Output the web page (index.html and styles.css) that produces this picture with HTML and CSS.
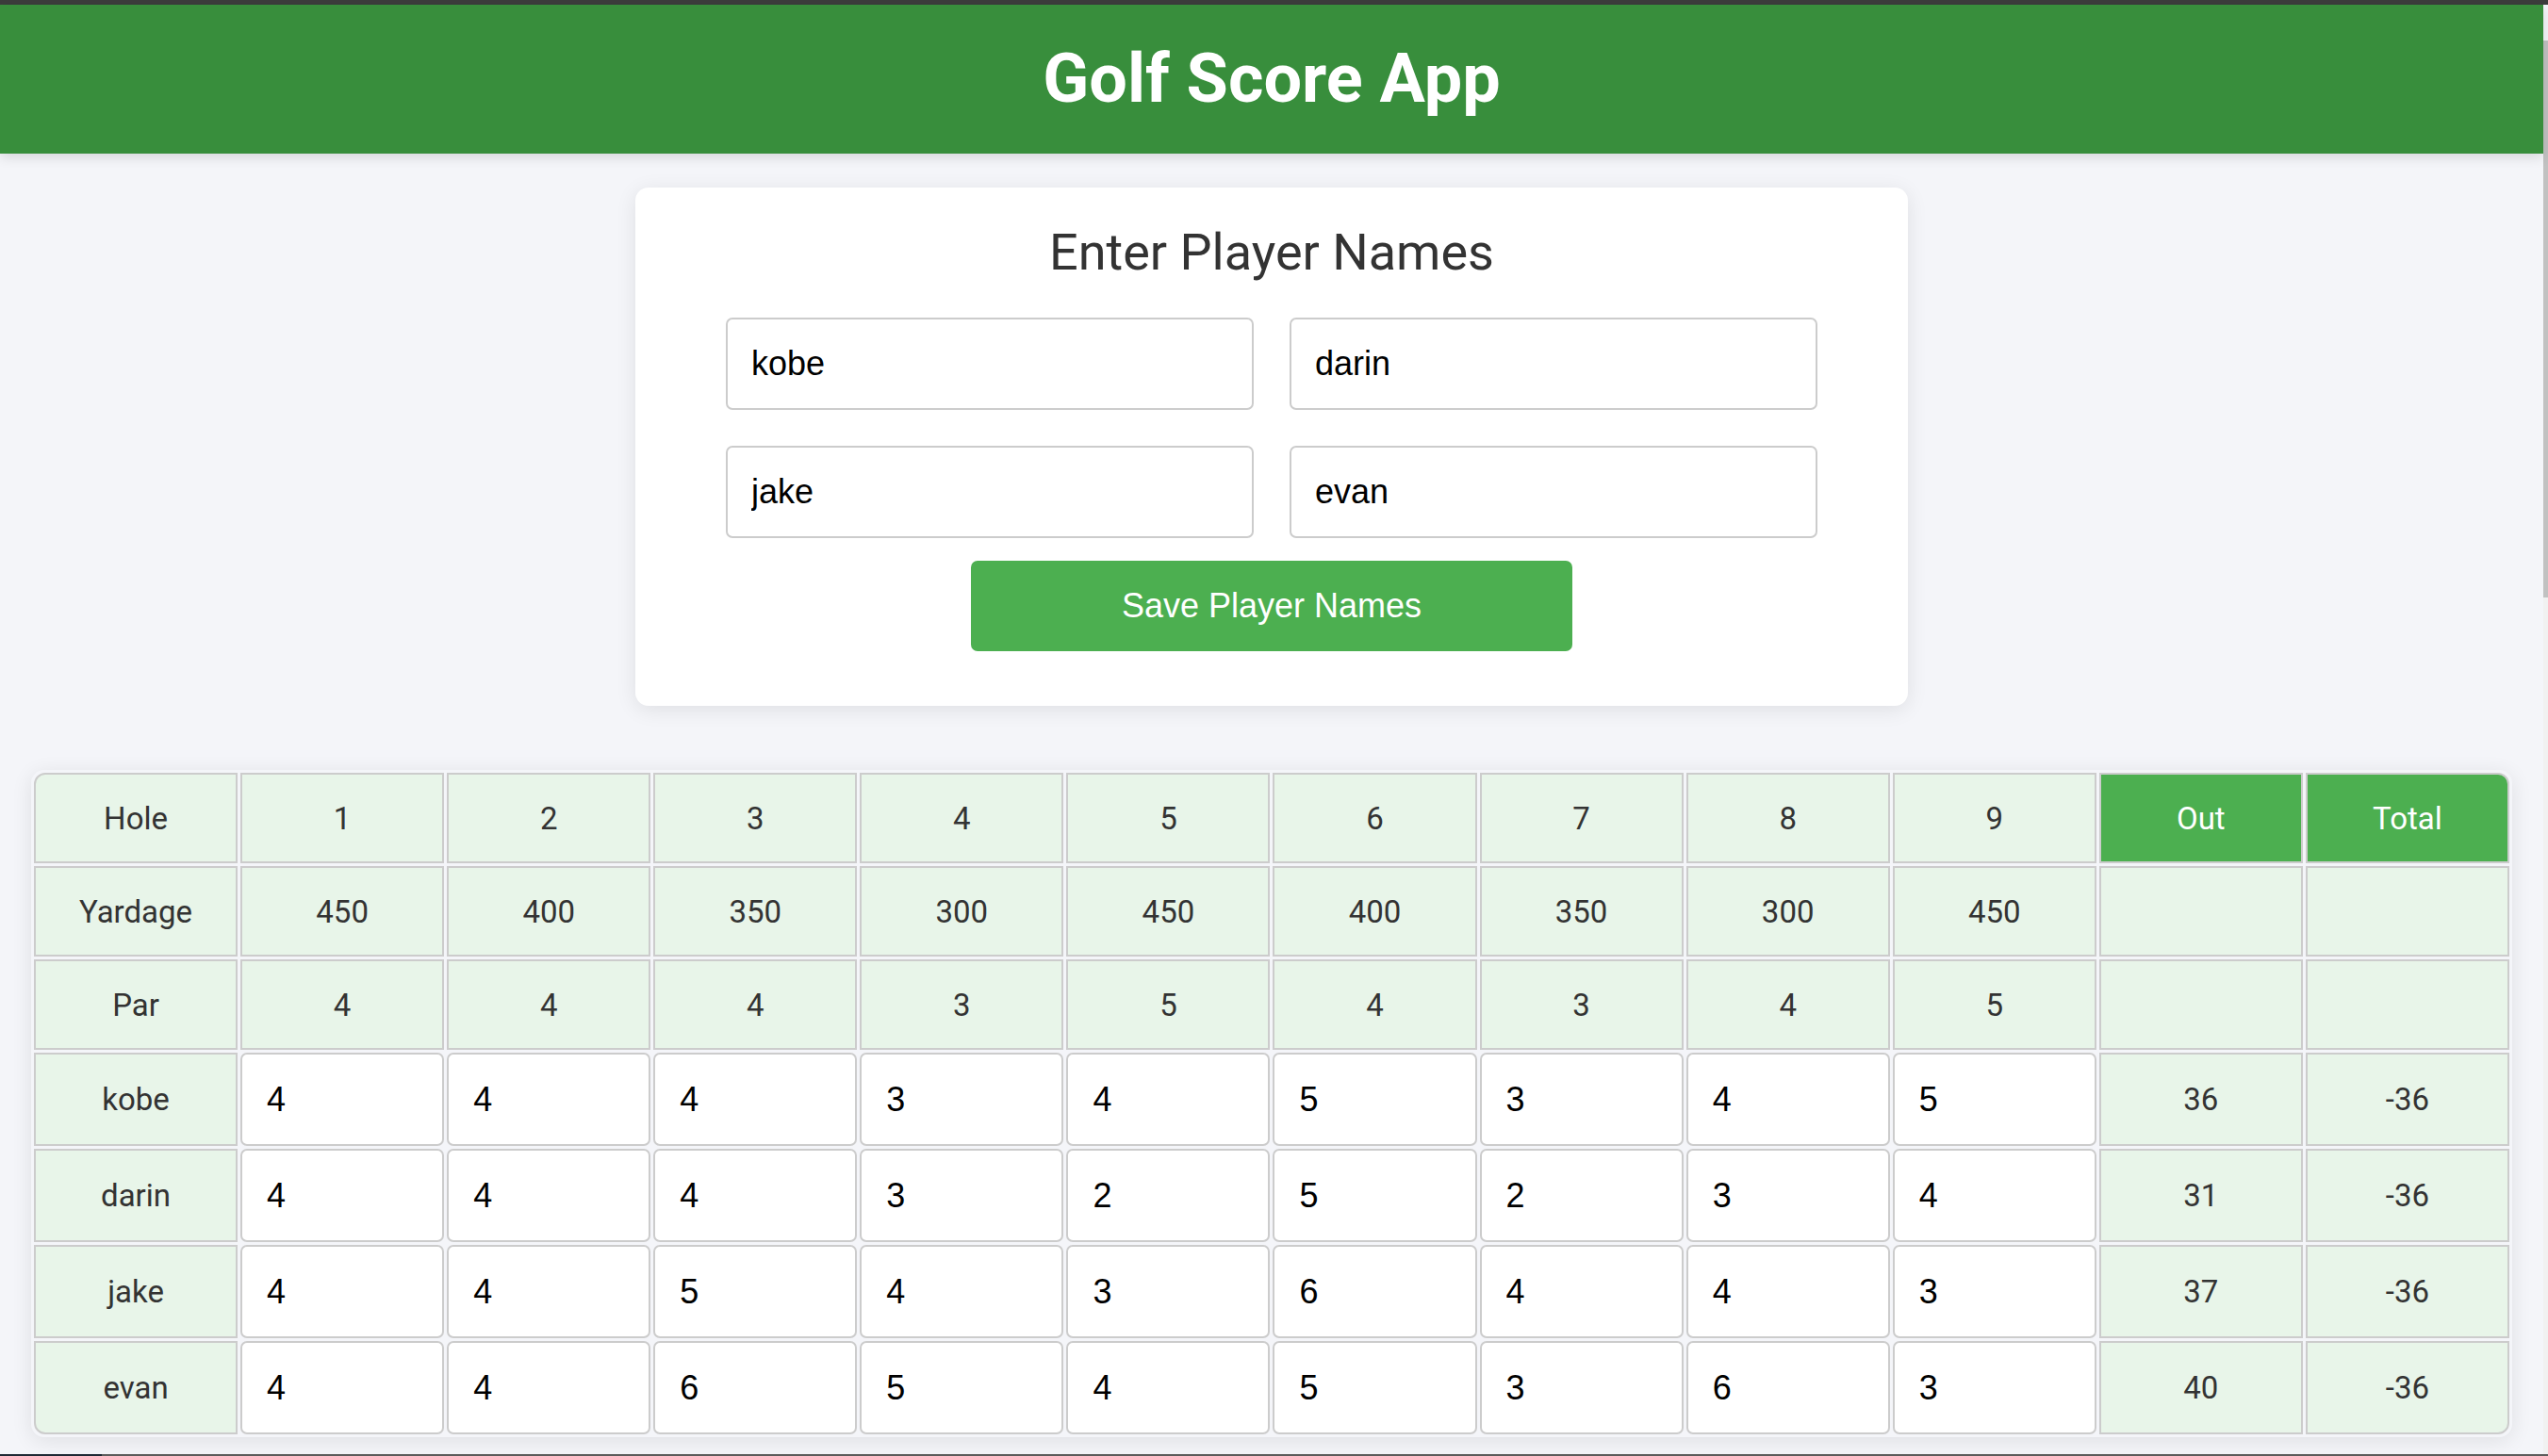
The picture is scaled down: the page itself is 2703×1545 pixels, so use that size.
FILE: index.html
```html
<!DOCTYPE html>
<html lang="en">
<head>
<meta charset="utf-8">
<title>Golf Score App</title>
<link rel="stylesheet" href="styles.css">
</head>
<body>
<div class="topbar"></div>
<div class="page">
  <header class="app-header">
    <h1 class="app-title">Golf Score App</h1>
  </header>

  <section class="card">
    <h2 class="card-title">Enter Player Names</h2>
    <div class="name-grid">
      <input class="name-input" type="text" value="kobe">
      <input class="name-input" type="text" value="darin">
      <input class="name-input" type="text" value="jake">
      <input class="name-input" type="text" value="evan">
    </div>
    <button class="save-btn" type="button">Save Player Names</button>
  </section>

  <section class="score-section">
    <table class="scorecard">
      <tbody>
        <tr class="info-row">
          <td>Hole</td><td>1</td><td>2</td><td>3</td><td>4</td><td>5</td><td>6</td><td>7</td><td>8</td><td>9</td>
          <td class="accent">Out</td><td class="accent">Total</td>
        </tr>
        <tr class="info-row">
          <td>Yardage</td><td>450</td><td>400</td><td>350</td><td>300</td><td>450</td><td>400</td><td>350</td><td>300</td><td>450</td><td></td><td></td>
        </tr>
        <tr class="info-row">
          <td>Par</td><td>4</td><td>4</td><td>4</td><td>3</td><td>5</td><td>4</td><td>3</td><td>4</td><td>5</td><td></td><td></td>
        </tr>
        <tr class="player-row">
          <td>kobe</td>
          <td class="score"><input type="text" value="4"></td>
          <td class="score"><input type="text" value="4"></td>
          <td class="score"><input type="text" value="4"></td>
          <td class="score"><input type="text" value="3"></td>
          <td class="score"><input type="text" value="4"></td>
          <td class="score"><input type="text" value="5"></td>
          <td class="score"><input type="text" value="3"></td>
          <td class="score"><input type="text" value="4"></td>
          <td class="score"><input type="text" value="5"></td>
          <td>36</td><td>-36</td>
        </tr>
        <tr class="player-row">
          <td>darin</td>
          <td class="score"><input type="text" value="4"></td>
          <td class="score"><input type="text" value="4"></td>
          <td class="score"><input type="text" value="4"></td>
          <td class="score"><input type="text" value="3"></td>
          <td class="score"><input type="text" value="2"></td>
          <td class="score"><input type="text" value="5"></td>
          <td class="score"><input type="text" value="2"></td>
          <td class="score"><input type="text" value="3"></td>
          <td class="score"><input type="text" value="4"></td>
          <td>31</td><td>-36</td>
        </tr>
        <tr class="player-row">
          <td>jake</td>
          <td class="score"><input type="text" value="4"></td>
          <td class="score"><input type="text" value="4"></td>
          <td class="score"><input type="text" value="5"></td>
          <td class="score"><input type="text" value="4"></td>
          <td class="score"><input type="text" value="3"></td>
          <td class="score"><input type="text" value="6"></td>
          <td class="score"><input type="text" value="4"></td>
          <td class="score"><input type="text" value="4"></td>
          <td class="score"><input type="text" value="3"></td>
          <td>37</td><td>-36</td>
        </tr>
        <tr class="player-row">
          <td>evan</td>
          <td class="score"><input type="text" value="4"></td>
          <td class="score"><input type="text" value="4"></td>
          <td class="score"><input type="text" value="6"></td>
          <td class="score"><input type="text" value="5"></td>
          <td class="score"><input type="text" value="4"></td>
          <td class="score"><input type="text" value="5"></td>
          <td class="score"><input type="text" value="3"></td>
          <td class="score"><input type="text" value="6"></td>
          <td class="score"><input type="text" value="3"></td>
          <td>40</td><td>-36</td>
        </tr>
      </tbody>
    </table>
  </section>
</div>
<div class="fake-scrollbar"><div class="fake-thumb"></div></div>
<div class="taskbar-edge"></div>
</body>
</html>
```

FILE: styles.css
```css
* {
  box-sizing: border-box;
}

html, body {
  margin: 0;
  padding: 0;
  height: 100%;
  overflow: hidden;
}

body {
  background: #f4f5f9;
  font-family: Roboto, "Liberation Sans", Arial, sans-serif;
  color: #333;
}

.topbar {
  height: 5px;
  background: #3c3c3c;
}

.page {
  margin-right: 5px;
}

.app-header {
  height: 158px;
  background: #388e3c;
  display: flex;
  align-items: center;
  justify-content: center;
  box-shadow: 0 4px 12px rgba(0, 0, 0, 0.12);
  position: relative;
  z-index: 1;
}

.app-title {
  margin: 0;
  font-family: Roboto, sans-serif;
  font-weight: 700;
  font-size: 72px;
  color: #fff;
  line-height: 1;
}

.card {
  width: 1350px;
  margin: 36px auto 0;
  background: #fff;
  border-radius: 14px;
  padding: 37px 96px 58px;
  box-shadow: 0 4px 22px rgba(0, 0, 0, 0.09);
  display: flex;
  flex-direction: column;
  align-items: center;
}

.card-title {
  margin: 0 0 38px;
  font-family: Roboto, sans-serif;
  font-weight: 400;
  font-size: 54px;
  line-height: normal;
  color: #333;
}

.name-grid {
  width: 100%;
  display: grid;
  grid-template-columns: 1fr 1fr;
  column-gap: 38px;
  row-gap: 38px;
}

.name-input {
  height: 98px;
  width: 100%;
  border: 2px solid #ccc;
  border-radius: 7px;
  padding: 0 25px;
  font-family: "Liberation Sans", Arial, sans-serif;
  font-size: 36px;
  color: #000;
  background: #fff;
  outline: none;
}

.save-btn {
  margin-top: 24px;
  width: 638px;
  height: 96px;
  border: none;
  border-radius: 7px;
  background: #4caf50;
  color: #fff;
  font-family: "Liberation Sans", Arial, sans-serif;
  font-size: 36px;
}

.score-section {
  padding: 68px 33px 0;
}

.scorecard {
  width: 100%;
  table-layout: fixed;
  border-collapse: separate;
  border-spacing: 3.5px;
  border-radius: 14px;
  box-shadow: 0 4px 22px rgba(0, 0, 0, 0.09);
}

.scorecard td {
  border: 2px solid #ccc;
  background: #e8f5e9;
  text-align: center;
  vertical-align: middle;
  padding: 0;
  font-family: Roboto, sans-serif;
  font-size: 33px;
  color: #333;
}

.info-row td {
  height: 96px;
}

.player-row td {
  height: 99px;
}

.scorecard td.accent {
  background: #4caf50;
  color: #fff;
}

.scorecard td.score {
  border: none;
  background: transparent;
}

.score input {
  display: block;
  width: 100%;
  height: 99px;
  border: 2px solid #ccc;
  border-radius: 7px;
  padding: 0 26px;
  background: #fff;
  font-family: "Liberation Sans", Arial, sans-serif;
  font-size: 36px;
  color: #000;
  outline: none;
}

.scorecard tr:first-child td:first-child {
  border-top-left-radius: 12px;
}

.scorecard tr:first-child td:last-child {
  border-top-right-radius: 12px;
}

.scorecard tr:last-child td:first-child {
  border-bottom-left-radius: 12px;
}

.scorecard tr:last-child td:last-child {
  border-bottom-right-radius: 12px;
}

.fake-scrollbar {
  position: fixed;
  top: 43px;
  right: 0;
  bottom: 0;
  width: 5px;
  background: #f1f1f1;
}

.fake-thumb {
  height: 591px;
  background: #c1c1c1;
}

.taskbar-edge {
  position: fixed;
  left: 0;
  right: 0;
  bottom: 0;
  height: 2px;
  background: linear-gradient(to right, #1f2a35 0, #1f2a35 108px, #5c5c5c 108px);
}
```
